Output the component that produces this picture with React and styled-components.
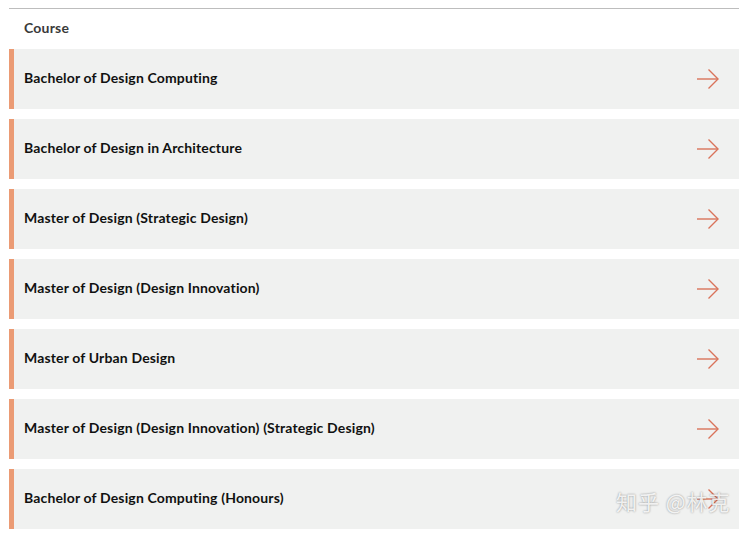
import React from "react";
import styled, { createGlobalStyle } from "styled-components";

const courses = [
    "Bachelor of Design Computing",
    "Bachelor of Design in Architecture",
    "Master of Design (Strategic Design)",
    "Master of Design (Design Innovation)",
    "Master of Urban Design",
    "Master of Design (Design Innovation) (Strategic Design)",
    "Bachelor of Design Computing (Honours)",
];

const GlobalStyle = createGlobalStyle`
    body {
        margin: 0;
        background: #ffffff;
        font-family: "Lato", "Noto Sans", sans-serif;
    }
`;

const Arrow = () => (
    <svg width="24" height="22" viewBox="0 0 24 22" fill="none">
        <path d="M1 11h21" stroke="#d9735a" strokeWidth="1.4" />
        <path d="M12.5 1.5L22 11l-9.5 9.5" stroke="#d9735a" strokeWidth="1.4" />
    </svg>
);

const App = () => {
    return (
        <>
            <GlobalStyle />
            <Page>
                <Header>Course</Header>
                <List>
                    {courses.map((name) => (
                        <Row key={name}>
                            <Label>{name}</Label>
                            <Arrow />
                        </Row>
                    ))}
                </List>
                <Watermark>知乎 @林克</Watermark>
            </Page>
        </>
    );
};

const Page = styled.div`
    position: relative;
    padding: 8px 15px 0 9px;
    width: 754px;
    box-sizing: border-box;
`;

const Header = styled.div`
    border-top: 1px solid #bdbdbd;
    padding: 10px 0 0 15px;
    height: 41px;
    box-sizing: border-box;
    font-size: 14px;
    font-weight: 700;
    letter-spacing: 0.2px;
    color: #3a3a3a;
`;

const List = styled.div`
    display: flex;
    flex-direction: column;
    gap: 10px;
`;

const Row = styled.div`
    display: flex;
    align-items: center;
    justify-content: space-between;
    height: 60px;
    box-sizing: border-box;
    background: #f0f1f0;
    border-left: 5px solid #eb9b74;
    padding: 0 19px 0 10px;
    cursor: pointer;
`;

const Label = styled.span`
    margin-bottom: 3px;
    font-size: 14px;
    font-weight: 700;
    letter-spacing: 0.15px;
    color: #111111;
`;

const Watermark = styled.div`
    position: absolute;
    left: 616px;
    top: 486px;
    font-family: "Noto Sans CJK SC", sans-serif;
    font-size: 21px;
    color: rgba(255, 255, 255, 0.85);
    text-shadow: 0 0 2px rgba(0, 0, 0, 0.45);
    letter-spacing: 1px;
    pointer-events: none;
`;

export default App;
